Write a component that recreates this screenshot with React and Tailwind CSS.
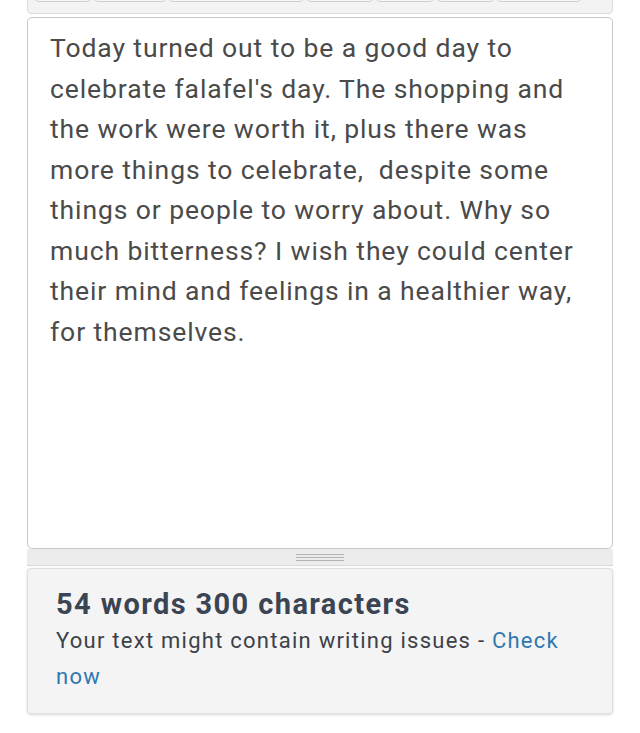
import React from 'react';

const buttons = [
  { w: 'w-[56px]' },
  { w: 'w-[72px]' },
  { w: 'w-[135px]' },
  { w: 'w-[66px]' },
  { w: 'w-[58px]' },
  { w: 'w-[57px]' },
  { w: 'w-[84px]' },
];

const lines = [
  'Today turned out to be a good day to',
  "celebrate falafel's day. The shopping and",
  'the work were worth it, plus there was',
  'more things to celebrate,  despite some',
  'things or people to worry about. Why so',
  'much bitterness? I wish they could center',
  'their mind and feelings in a healthier way,',
  'for themselves.',
];

export default function App() {
  return (
    <div className="w-[640px] h-[733px] bg-white font-['Roboto',sans-serif] overflow-hidden">
      <div className="ml-[27px] w-[586px]">
        {/* toolbar, scrolled mostly out of view */}
        <div className="-mt-[30px] h-[44px] bg-[#f3f3f3] border border-[#dcdcdc] rounded-b-[4px] flex items-end gap-[3px] pl-[7px] pb-[11px]">
          {buttons.map((b, i) => (
            <div
              key={i}
              className={`${b.w} h-[30px] bg-[#f7f7f7] border border-[#cfcfcf] rounded-[4px]`}
            />
          ))}
        </div>

        {/* editor */}
        <div className="mt-[3px] h-[532px] bg-white border border-[#c8c8c8] rounded-[5px] pl-[22px] pr-[10px] pt-[10px]">
          <p className="text-[26.5px] leading-[40.5px] tracking-[0.9px] text-[#4a4a4a] whitespace-pre">
            {lines.map((l, i) => (
              <span key={i} className="block">{l}</span>
            ))}
          </p>
        </div>

        {/* resize grip */}
        <div className="h-[17px] bg-[#ececec] border-b border-[#d8d8d8] flex flex-col items-center justify-center gap-[2px]">
          <div className="w-[48px] h-[1px] bg-[#b5b5b5]" />
          <div className="w-[48px] h-[1px] bg-[#b5b5b5]" />
          <div className="w-[48px] h-[1px] bg-[#b5b5b5]" />
        </div>

        {/* stats */}
        <div className="mt-[2px] h-[146px] bg-[#f4f4f4] border border-[#dedede] rounded-[4px] shadow-[0_1px_3px_rgba(0,0,0,0.15)] pl-[28px] pr-[20px] pt-[16px]">
          <h2 className="text-[29px] leading-[38px] font-bold tracking-[1.4px] text-[#3b4453]">54 words 300 characters</h2>
          <div className="text-[22px] leading-[36px] tracking-[1.25px] text-[#3c4148]">
            <p>
              Your text might contain writing issues - <a href="#" className="text-[#3178b0]">Check</a>
            </p>
            <p>
              <a href="#" className="text-[#3178b0]">now</a>
            </p>
          </div>
        </div>
      </div>
    </div>
  );
}
